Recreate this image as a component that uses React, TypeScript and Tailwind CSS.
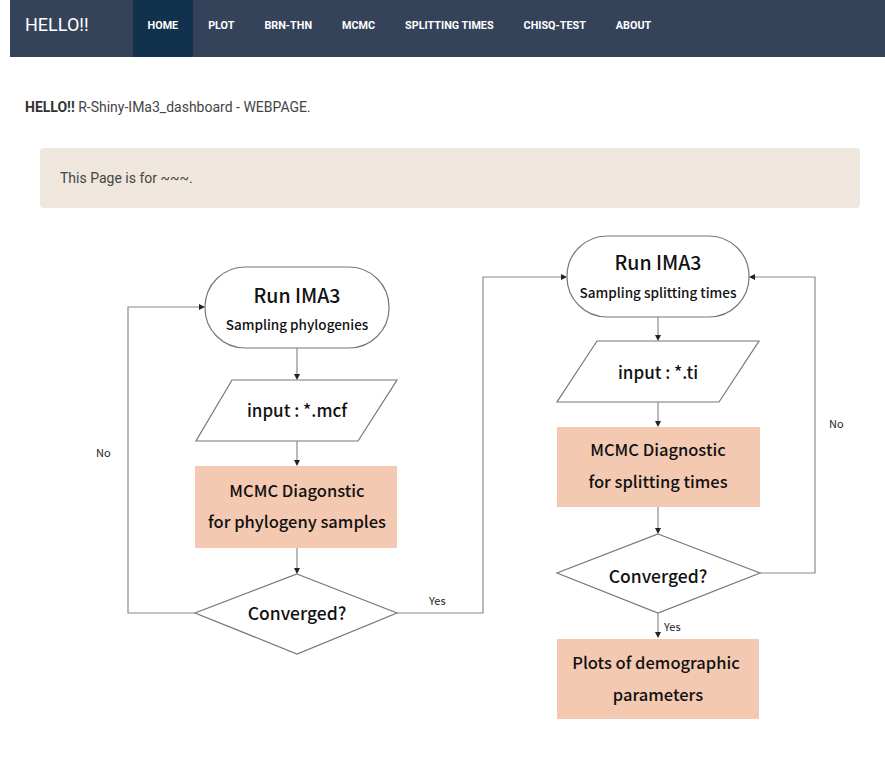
import React from "react";

const navItems = ["HOME", "PLOT", "BRN-THN", "MCMC", "SPLITTING TIMES", "CHISQ-TEST", "ABOUT"];

const chartFont = "'Noto Sans CJK KR', 'Liberation Sans', sans-serif";

// small arrow head pointing in a direction at (x, y)
const Head = ({ x, y, dir }: { x: number; y: number; dir: "down" | "right" | "left" }) => {
  let pts = "";
  if (dir === "down") pts = `${x - 3},${y - 6} ${x + 3},${y - 6} ${x},${y}`;
  if (dir === "right") pts = `${x - 6},${y - 3} ${x - 6},${y + 3} ${x},${y}`;
  if (dir === "left") pts = `${x + 6},${y - 3} ${x + 6},${y + 3} ${x},${y}`;
  return <polygon points={pts} fill="#222" />;
};

const Label = ({ x, y, size, children, weight = 500 }: { x: number; y: number; size: number; children: React.ReactNode; weight?: number }) => (
  <text x={x} y={y} fontSize={size} fontWeight={weight} textAnchor="middle" dominantBaseline="central" fill="#111" fontFamily={chartFont}>
    {children}
  </text>
);

const Flowchart = () => {
  const line = { stroke: "#8a8a8a", strokeWidth: 1.2, fill: "none" };
  return (
    <svg width="885" height="510" viewBox="0 225 885 510" className="block mt-[17px]">
      {/* left column */}
      <rect x={205} y={267} width={184} height={81} rx={40} fill="#fff" stroke="#777" strokeWidth={1.2} />
      <Label x={297} y={294} size={19.5}>Run IMA3</Label>
      <Label x={297} y={324} size={13.5}>Sampling phylogenies</Label>

      <line x1={297} y1={348} x2={297} y2={375} {...line} />
      <Head x={297} y={380} dir="down" />

      <polygon points="232,380 397,380 358,441 196,441" fill="#fff" stroke="#777" strokeWidth={1.2} />
      <Label x={297} y={409} size={17}>input : *.mcf</Label>

      <line x1={297} y1={441} x2={297} y2={461} {...line} />
      <Head x={297} y={466} dir="down" />

      <rect x={195} y={466} width={202} height={82} fill="#f4c9b1" />
      <Label x={297} y={490} size={16.5}>MCMC Diagonstic</Label>
      <Label x={297} y={521} size={16.5}>for phylogeny samples</Label>

      <line x1={297} y1={548} x2={297} y2={569} {...line} />
      <Head x={297} y={574} dir="down" />

      <polygon points="297,574 397,613 297,654 195,613" fill="#fff" stroke="#777" strokeWidth={1.2} />
      <Label x={297} y={612} size={17.5}>Converged?</Label>

      <polyline points="195,613 128,613 128,307 199,307" {...line} />
      <Head x={205} y={307} dir="right" />
      <text x={96} y={452} fontSize={11} fill="#222" dominantBaseline="central" fontFamily={chartFont}>No</text>

      <polyline points="397,613 483,613 483,277 561,277" {...line} />
      <Head x={567} y={277} dir="right" />
      <text x={429} y={600} fontSize={11} fill="#222" dominantBaseline="central" fontFamily={chartFont}>Yes</text>

      {/* right column */}
      <rect x={567} y={236} width={182} height={81} rx={40} fill="#fff" stroke="#777" strokeWidth={1.2} />
      <Label x={658} y={261} size={19.5}>Run IMA3</Label>
      <Label x={658} y={292} size={13.5}>Sampling splitting times</Label>

      <line x1={658} y1={317} x2={658} y2={336} {...line} />
      <Head x={658} y={341} dir="down" />

      <polygon points="597,341 759,341 719,402 557,402" fill="#fff" stroke="#777" strokeWidth={1.2} />
      <Label x={658} y={371} size={17}>input : *.ti</Label>

      <line x1={658} y1={402} x2={658} y2={422} {...line} />
      <Head x={658} y={427} dir="down" />

      <rect x={557} y={427} width={203} height={80} fill="#f4c9b1" />
      <Label x={658} y={449} size={16.5}>MCMC Diagnostic</Label>
      <Label x={658} y={481} size={16.5}>for splitting times</Label>

      <line x1={658} y1={507} x2={658} y2={529} {...line} />
      <Head x={658} y={534} dir="down" />

      <polygon points="658,534 760,573 658,613 557,573" fill="#fff" stroke="#777" strokeWidth={1.2} />
      <Label x={658} y={575} size={17.5}>Converged?</Label>

      <polyline points="760,573 815,573 815,277 755,277" {...line} />
      <Head x={749} y={277} dir="left" />
      <text x={829} y={423} fontSize={11} fill="#222" dominantBaseline="central" fontFamily={chartFont}>No</text>

      <line x1={658} y1={613} x2={658} y2={633} {...line} />
      <Head x={658} y={638} dir="down" />
      <text x={664} y={626} fontSize={11} fill="#222" dominantBaseline="central" fontFamily={chartFont}>Yes</text>

      <rect x={557} y={639} width={202} height={80} fill="#f4c9b1" />
      <Label x={656} y={662} size={16.5}>Plots of demographic</Label>
      <Label x={658} y={694} size={16.5}>parameters</Label>
    </svg>
  );
};

export default function App() {
  return (
    <div className="bg-white min-h-screen font-['Roboto',sans-serif] text-[#444]">
      {/* Navbar */}
      <nav className="ml-[10px] h-[57px] bg-[#35435a] flex items-stretch">
        <div className="pl-[15px] pr-[44px] pt-[14px] text-[18px] text-white leading-[22px]">HELLO!!</div>
        <ul className="flex items-stretch">
          {navItems.map((item, i) => (
            <li
              key={item}
              className={`px-[15px] pt-[19px] text-[10.8px] font-bold text-white leading-[14px] ${
                i === 0 ? "bg-[#12314c]" : ""
              }`}
            >
              {item}
            </li>
          ))}
        </ul>
      </nav>

      {/* Content */}
      <div className="pl-[25px] pr-[25px] pt-[40px]">
        <p className="text-[14px] leading-[20px]">
          <b className="font-bold text-[#333]">HELLO!!</b> R-Shiny-IMa3_dashboard - WEBPAGE.
        </p>
        <div className="mt-[31px] ml-[15px] h-[60px] rounded-[4px] bg-[#efe7de] px-[20px] flex items-center text-[14px]">
          This Page is for ~~~.
        </div>
      </div>

      <Flowchart />
    </div>
  );
}
